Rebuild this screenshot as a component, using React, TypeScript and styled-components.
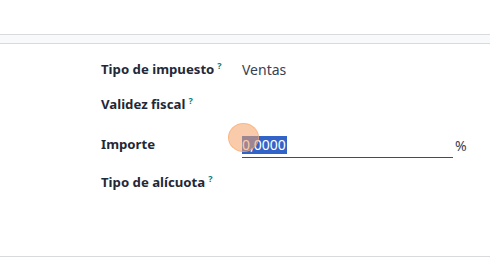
import styled, { createGlobalStyle } from 'styled-components';

const GlobalStyle = createGlobalStyle`
	html, body {
		margin: 0;
		padding: 0;
		background: #ffffff;
	}
	body {
		font-family: 'Noto Sans', 'Open Sans', sans-serif;
		color: #374151;
	}
`;

const Page = styled.div`
	width: 491px;
	height: 275px;
	overflow: hidden;
	padding-top: 34px;
	box-sizing: border-box;
`;

const Band = styled.div`
	width: 490px;
	height: 8px;
	background: #f8f9fa;
	border-top: 1px solid #d8dadd;
	border-bottom: 1px solid #d8dadd;
`;

const Form = styled.div`
	display: flex;
	flex-direction: column;
	padding: 8px 0 0 101px;
	height: 213px;
	box-sizing: border-box;
	border-bottom: 1px solid #d8dadd;
	width: 490px;
`;

const Row = styled.div<{ $h: number }>`
	display: flex;
	align-items: center;
	height: ${({ $h }) => $h}px;
`;

const Label = styled.div`
	width: 141px;
	font-size: 13.2px;
	font-weight: 700;
	color: #1f2937;
	white-space: nowrap;
`;

const Help = styled.sup`
	color: #017e84;
	font-size: 9px;
	font-weight: 700;
	margin-left: 3px;
`;

const Value = styled.div`
	font-size: 14px;
	color: #374151;
`;

const InputWrap = styled.div`
	position: relative;
	display: flex;
	align-items: center;
	gap: 2px;
	margin-top: 5px;
`;

const Input = styled.div`
	width: 211px;
	height: 23px;
	border-bottom: 1px solid #00687a;
	display: flex;
	align-items: flex-end;
	padding-bottom: 3px;
	box-sizing: border-box;
`;

const Selected = styled.span`
	display: inline-block;
	background: #3264c8;
	color: #ffffff;
	font-size: 14px;
	line-height: 18px;
	height: 18px;
	padding-right: 1px;
`;

const Unit = styled.span`
	font-size: 14px;
	color: #374151;
	margin-bottom: 2px;
`;

const Click = styled.div`
	position: absolute;
	left: -14px;
	top: -12px;
	width: 31px;
	height: 29px;
	border-radius: 50%;
	background: rgba(246, 160, 100, 0.55);
	border: 1px solid rgba(246, 170, 110, 0.6);
	box-sizing: border-box;
`;

export default function App() {
	return (
		<>
			<GlobalStyle />
			<Page>
				<Band />
				<Form>
					<Row $h={34}>
						<Label>
							Tipo de impuesto<Help>?</Help>
						</Label>
						<Value>Ventas</Value>
					</Row>
					<Row $h={36}>
						<Label>
							Validez fiscal<Help>?</Help>
						</Label>
					</Row>
					<Row $h={44}>
						<Label>Importe</Label>
						<InputWrap>
							<Input>
								<Selected>0,0000</Selected>
							</Input>
							<Unit>%</Unit>
							<Click />
						</InputWrap>
					</Row>
					<Row $h={32}>
						<Label>
							Tipo de alícuota<Help>?</Help>
						</Label>
					</Row>
				</Form>
			</Page>
		</>
	);
}
